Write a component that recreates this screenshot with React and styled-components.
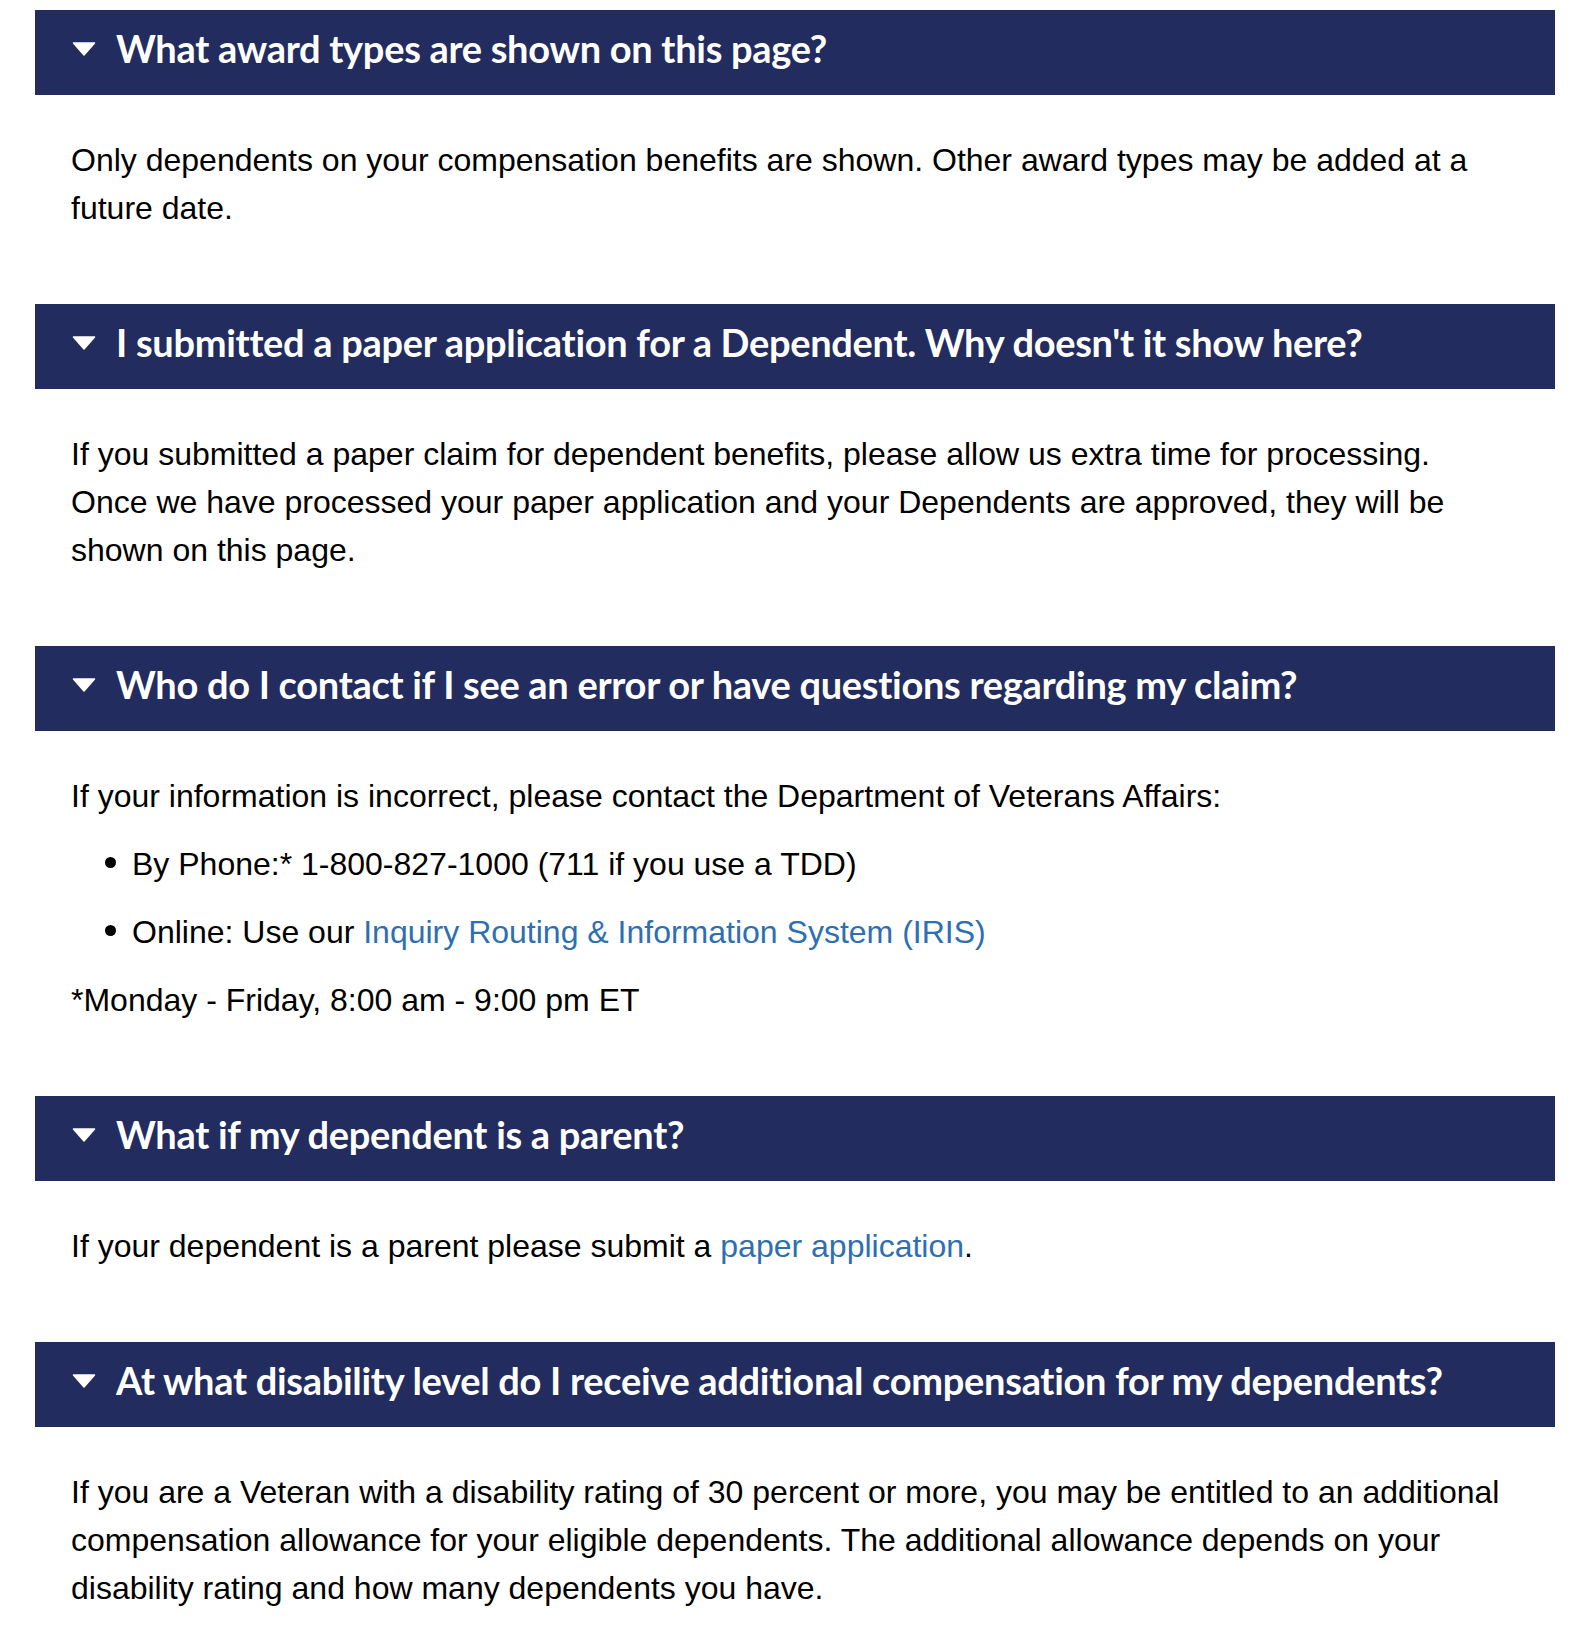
import React from "react";
import styled, { createGlobalStyle } from "styled-components";

const GlobalStyle = createGlobalStyle`
  html, body {
    margin: 0;
    padding: 0;
    background: #ffffff;
  }
`;

const COLORS = {
  navy: "#222c5f",
  text: "#000000",
  link: "#2e6fb1",
};

const Page = styled.div`
  padding: 10px 15px 0 35px;
  display: flex;
  flex-direction: column;
`;

const Section = styled.section`
  display: flex;
  flex-direction: column;
`;

const Header = styled.div`
  background: ${COLORS.navy};
  height: 85px;
  display: flex;
  align-items: center;
  padding-left: 37px;
  gap: 20px;
  box-sizing: border-box;
`;

const CaretSvg = styled.svg`
  width: 24px;
  height: 14px;
  flex-shrink: 0;
  margin-top: -7px;
`;

const Title = styled.h3`
  margin: 0;
  color: #ffffff;
  font-family: Lato, "Noto Sans", sans-serif;
  font-weight: 700;
  font-size: 38px;
  letter-spacing: -0.3px;
  margin-top: -10px;
`;

const Content = styled.div`
  padding: 41px 48px 72px 36px;
  color: ${COLORS.text};
  font-family: "Liberation Sans", Arial, sans-serif;
  font-size: 32px;
  line-height: 48px;
`;

const Paragraph = styled.p`
  margin: 0;
  & + ul {
    margin-top: 20px;
  }
  ul + & {
    margin-top: 20px;
  }
`;

const List = styled.ul`
  margin: 0;
  padding-left: 61px;
  list-style: none;
`;

const Item = styled.li`
  &::before {
    content: "";
    display: inline-block;
    width: 11px;
    height: 11px;
    border-radius: 50%;
    background: ${COLORS.text};
    margin-left: -27px;
    margin-right: 16px;
    vertical-align: 7px;
  }
  & + & {
    margin-top: 20px;
  }
`;

const Link = styled.a`
  color: ${COLORS.link};
  text-decoration: none;
`;

const faqs = [
  {
    title: "What award types are shown on this page?",
    body: (
      <Paragraph>
        Only dependents on your compensation benefits are shown. Other award
        types may be added at a future date.
      </Paragraph>
    ),
  },
  {
    title:
      "I submitted a paper application for a Dependent. Why doesn't it show here?",
    body: (
      <Paragraph>
        If you submitted a paper claim for dependent benefits, please allow us
        extra time for processing. Once we have processed your paper
        application and your Dependents are approved, they will be shown on
        this page.
      </Paragraph>
    ),
  },
  {
    title: "Who do I contact if I see an error or have questions regarding my claim?",
    body: (
      <>
        <Paragraph>
          If your information is incorrect, please contact the Department of
          Veterans Affairs:
        </Paragraph>
        <List>
          <Item>By Phone:* 1-800-827-1000 (711 if you use a TDD)</Item>
          <Item>
            Online: Use our{" "}
            <Link href="#">Inquiry Routing &amp; Information System (IRIS)</Link>
          </Item>
        </List>
        <Paragraph>*Monday - Friday, 8:00 am - 9:00 pm ET</Paragraph>
      </>
    ),
  },
  {
    title: "What if my dependent is a parent?",
    body: (
      <Paragraph>
        If your dependent is a parent please submit a{" "}
        <Link href="#">paper application</Link>.
      </Paragraph>
    ),
  },
  {
    title:
      "At what disability level do I receive additional compensation for my dependents?",
    body: (
      <Paragraph>
        If you are a Veteran with a disability rating of 30 percent or more, you
        may be entitled to an additional compensation allowance for your
        eligible dependents. The additional allowance depends on your
        disability rating and how many dependents you have.
      </Paragraph>
    ),
  },
];

const Caret = () => (
  <CaretSvg viewBox="0 0 24 14" aria-hidden="true">
    <path
      d="M1.5 1 L22.5 1 L12 13 Z"
      fill="#ffffff"
      stroke="#ffffff"
      strokeWidth="1.5"
      strokeLinejoin="round"
    />
  </CaretSvg>
);

export default function App() {
  return (
    <>
      <GlobalStyle />
      <Page>
        {faqs.map((faq) => (
          <Section key={faq.title}>
            <Header>
              <Caret />
              <Title>{faq.title}</Title>
            </Header>
            <Content>{faq.body}</Content>
          </Section>
        ))}
      </Page>
    </>
  );
}
